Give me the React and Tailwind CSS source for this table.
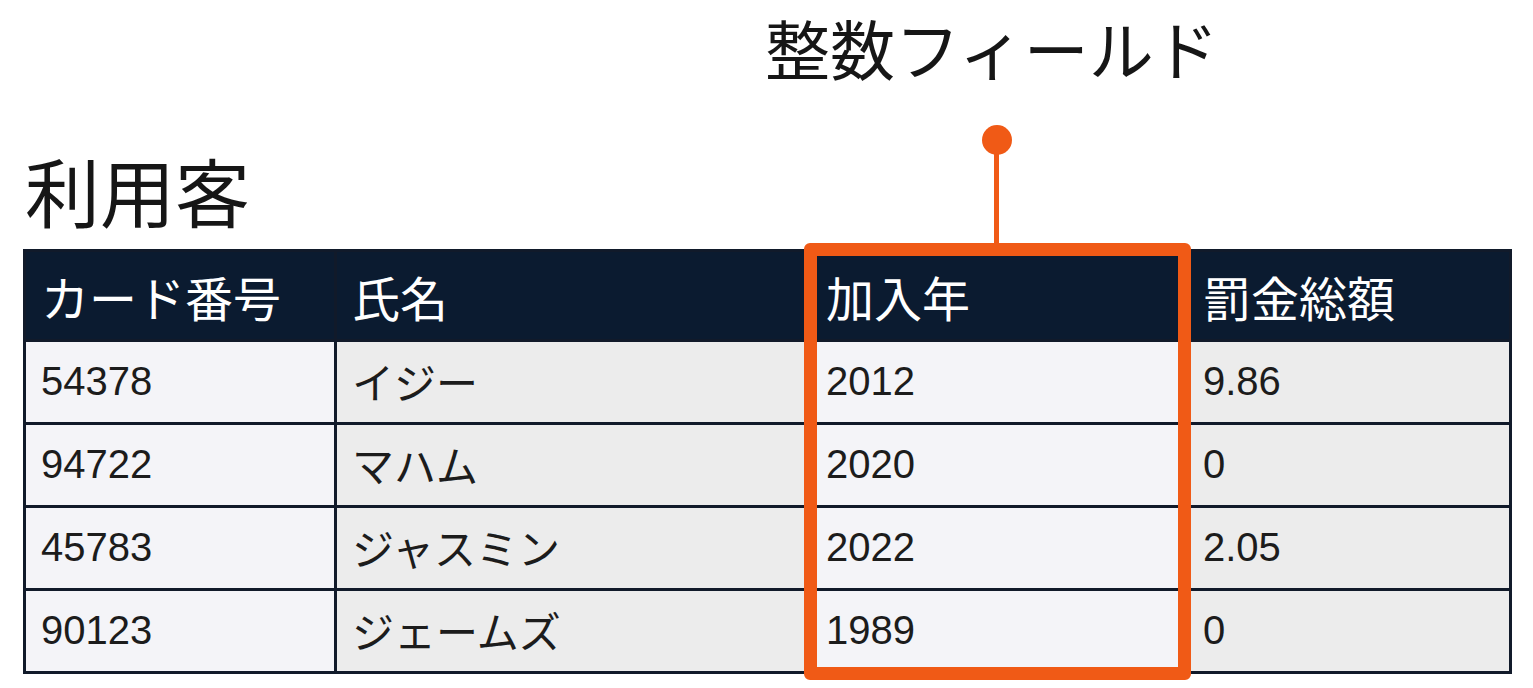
import { Fragment } from "react";

const rows = [
  { card: "54378", name: "イジー", year: "2012", fine: "9.86" },
  { card: "94722", name: "マハム", year: "2020", fine: "0" },
  { card: "45783", name: "ジャスミン", year: "2022", fine: "2.05" },
  { card: "90123", name: "ジェームズ", year: "1989", fine: "0" },
];

const jp = "font-['Noto_Sans_CJK_JP',sans-serif]";
const num = "font-['Liberation_Sans','Noto_Sans_CJK_JP',sans-serif]";

function HeadCell({ children }) {
  return (
    <div className={`bg-[#0b1b30] text-white text-[48px] leading-none ${jp} flex items-center px-[15px]`}>
      {children}
    </div>
  );
}

function Cell({ children, shade, name }) {
  return (
    <div
      className={`${shade ? "bg-[#ececec]" : "bg-[#f4f4f8]"} text-[#1c1c1c] flex items-center px-[15px] pb-[3px] leading-none ${
        name ? `text-[42px] ${jp}` : `text-[40px] ${num}`
      }`}
    >
      {children}
    </div>
  );
}

export default function App() {
  return (
    <div className={`relative w-[1533px] h-[688px] bg-white overflow-hidden ${jp}`}>
      {/* callout label */}
      <div className="pt-[15px] pl-[765px] text-[65px] leading-none text-[#161616]">整数フィールド</div>

      <h1 className="mt-[72px] pl-[25px] text-[75px] leading-none font-normal text-[#161616]">利用客</h1>

      {/* table */}
      <div className="mt-[22px] ml-[23px] w-[1489px] border-[3px] border-[#111a2a] bg-[#111a2a]">
        <div className="grid grid-cols-[308px_471px_374px_1fr] grid-rows-[87px_80px_80px_80px_80px] gap-[3px]">
          <HeadCell>カード番号</HeadCell>
          <HeadCell>氏名</HeadCell>
          <HeadCell>加入年</HeadCell>
          <HeadCell>罰金総額</HeadCell>
          {rows.map((r) => (
            <Fragment key={r.card}>
              <Cell>{r.card}</Cell>
              <Cell shade name>{r.name}</Cell>
              <Cell>{r.year}</Cell>
              <Cell shade>{r.fine}</Cell>
            </Fragment>
          ))}
        </div>
      </div>

      {/* highlight over the 加入年 column */}
      <div className="absolute left-[804px] top-[243px] w-[387px] h-[437px] border-[13px] border-[#f05a16] rounded-[6px]" />
      <div className="absolute left-[994px] top-[140px] w-[5px] h-[105px] bg-[#f05a16]" />
      <div className="absolute left-[982px] top-[125px] w-[30px] h-[30px] rounded-full bg-[#f05a16]" />
    </div>
  );
}
